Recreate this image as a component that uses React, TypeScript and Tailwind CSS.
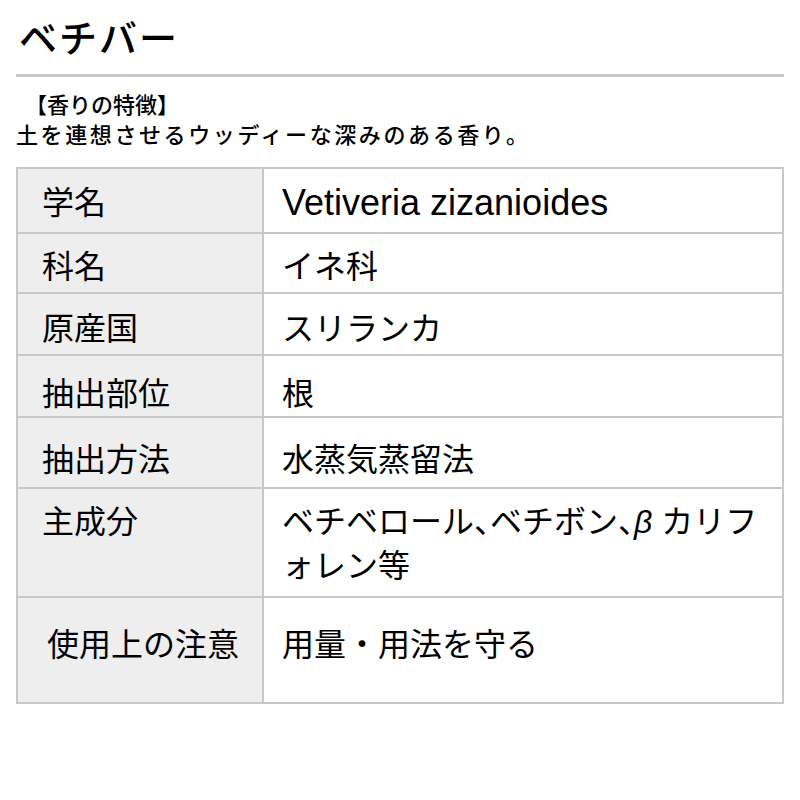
const font = "font-['Liberation_Sans','Noto_Sans_CJK_JP',sans-serif]";

type Row = {
  label: string;
  value: React.ReactNode;
  rowClass: string;
  labelClass?: string;
};

const rows: Row[] = [
  {
    label: '学名',
    value: <span className="text-[36px]">Vetiveria zizanioides</span>,
    rowClass: 'h-[63px] pt-[12px]',
  },
  { label: '科名', value: 'イネ科', rowClass: 'h-[58px] pt-[11px]' },
  { label: '原産国', value: 'スリランカ', rowClass: 'h-[60px] pt-[13px]' },
  { label: '抽出部位', value: '根', rowClass: 'h-[60px] pt-[16px]' },
  { label: '抽出方法', value: '水蒸気蒸留法', rowClass: 'h-[69px] pt-[20px]' },
  {
    label: '主成分',
    value: (
      <>
        ベチベロール<span className="tracking-[-0.5em]">、</span>ベチボン
        <span className="tracking-[-0.5em]">、</span>
        <span className="italic">β</span> カリフ
        <br />
        ォレン等
      </>
    ),
    rowClass: 'h-[107px] pt-[11px]',
  },
  {
    label: '使用上の注意',
    value: '用量・用法を守る',
    rowClass: 'h-[104px] pt-[25px]',
    labelClass: 'pl-[29px]',
  },
];

export default function App() {
  return (
    <div className={`${font} w-[800px] h-[800px] bg-white text-black px-4 pt-[16px]`}>
      <h1 className="font-medium text-[38px] leading-[46px] tracking-[2px] pl-[3px]">ベチバー</h1>
      <div className="mt-[12px] h-[3px] bg-[#c8c8c8]" />

      <div className="mt-[14px] font-medium text-[22px] leading-[30px]">
        <p className="pl-[9px]">【香りの特徴】</p>
        <p className="tracking-[2.6px]">土を連想させるウッディーな深みのある香り。</p>
      </div>

      <div className="mt-[16px] border-2 border-[#c8c8c8] text-[32px] leading-[44px]">
        {rows.map((r, i) => (
          <div
            key={r.label}
            className={`flex ${i > 0 ? 'border-t-2 border-[#c8c8c8]' : ''}`}
          >
            <div
              className={`w-[246px] shrink-0 bg-[#eeeeee] border-r-2 border-[#c8c8c8] ${r.rowClass} ${r.labelClass ?? 'pl-[24px]'}`}
            >
              {r.label}
            </div>
            <div className={`flex-1 pl-[18px] whitespace-nowrap ${r.rowClass}`}>{r.value}</div>
          </div>
        ))}
      </div>
    </div>
  );
}
